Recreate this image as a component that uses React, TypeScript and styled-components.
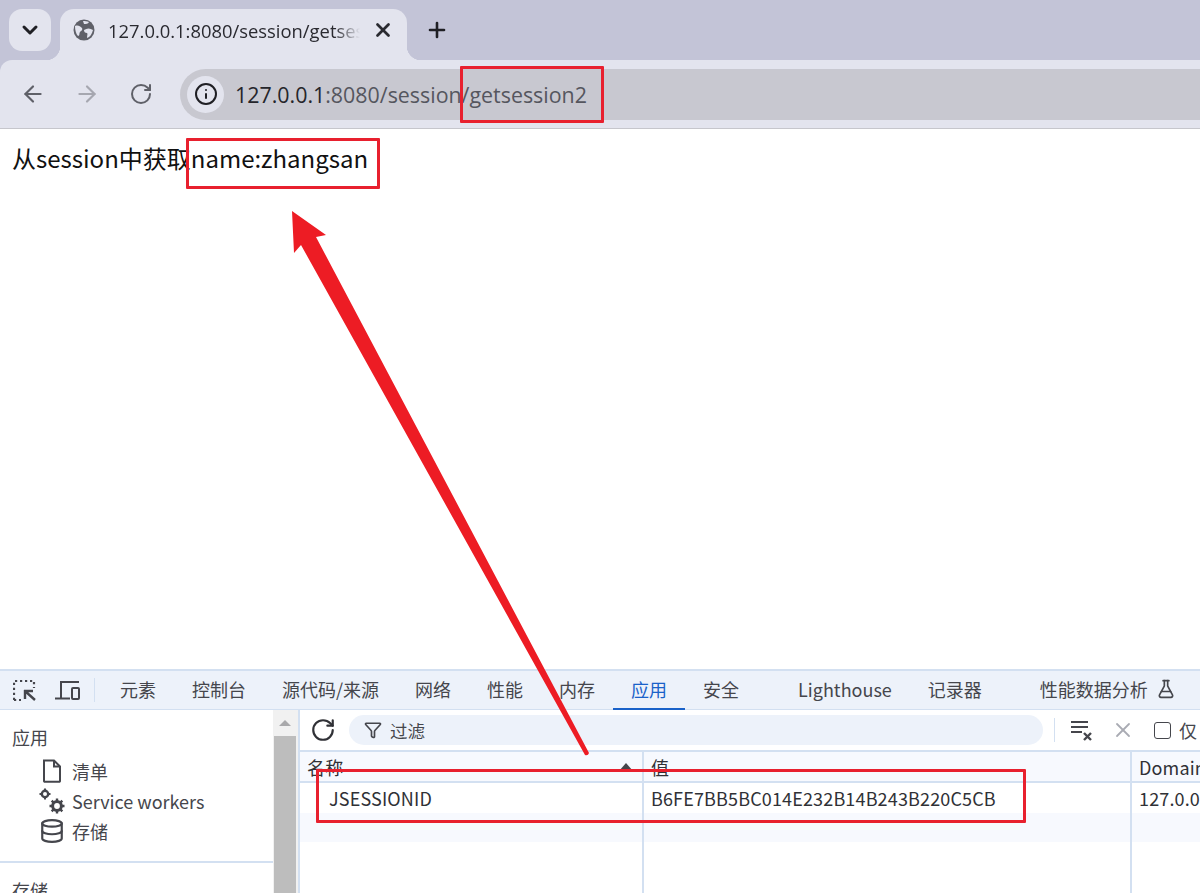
import React from "react";
import styled, { createGlobalStyle } from "styled-components";
import { ChevronDown, X, Plus, ArrowLeft, ArrowRight, RotateCw, Info, Filter, Database, FlaskConical } from "lucide-react";

const sans = `"Noto Sans CJK SC", "Noto Sans", sans-serif`;
const ui = `"Open Sans", "Noto Sans CJK SC", sans-serif`;

const Global = createGlobalStyle`
  html, body { margin: 0; padding: 0; background: #fff; }
  body { width: 1200px; height: 893px; overflow: hidden; font-family: ${ui}; }
`;

const Page = styled.div`
  position: relative;
  width: 1200px;
  height: 893px;
  overflow: hidden;
  display: flex;
  flex-direction: column;
`;

const BrowserChrome = styled.div`
  flex: none;
  background: #c3c4d7;
`;

const TabStrip = styled.div`
  height: 60px;
  display: flex;
  align-items: flex-end;
  padding-left: 9px;
  box-sizing: border-box;
`;

const TabMenu = styled.div`
  width: 42px;
  height: 42px;
  margin: 0 9px 9px 0;
  border-radius: 13px;
  background: #e3e4ee;
  display: flex;
  align-items: center;
  justify-content: center;
  color: #1f1f24;
  position: relative;
  z-index: 1;
`;

const Tab = styled.div`
  position: relative;
  width: 347px;
  height: 51px;
  background: #e3e4ee;
  border-radius: 14px 14px 0 0;
  display: flex;
  align-items: center;
  padding: 0 0 9px 13px;
  box-sizing: border-box;
  gap: 13px;
  color: #2a2a30;

  &::before,
  &::after {
    content: "";
    position: absolute;
    bottom: 0;
    width: 14px;
    height: 14px;
  }
  &::before {
    left: -14px;
    background: radial-gradient(circle at 0 0, transparent 14px, #e3e4ee 14.5px);
  }
  &::after {
    right: -14px;
    background: radial-gradient(circle at 100% 0, transparent 14px, #e3e4ee 14.5px);
  }
`;

const TabTitle = styled.div`
  width: 252px;
  overflow: hidden;
  white-space: nowrap;
  font-size: 18.4px;
  -webkit-mask-image: linear-gradient(to right, #000 90%, transparent 100%);
  mask-image: linear-gradient(to right, #000 90%, transparent 100%);
`;

const NewTab = styled.div`
  margin: 0 0 18px 18px;
  color: #1f1f24;
  display: flex;
`;

const Toolbar = styled.div`
  height: 69px;
  background: #e3e4ee;
  border-bottom: 1px solid #c6c6cc;
  border-radius: 12px 0 0 0;
  box-sizing: border-box;
  display: flex;
  align-items: center;
  padding-left: 20px;
`;

const NavIcon = styled.div<{ $dim?: boolean }>`
  width: 26px;
  margin-right: 28px;
  display: flex;
  justify-content: center;
  color: ${(p) => (p.$dim ? "#a6a7b0" : "#5f6068")};
`;

const AddressBar = styled.div`
  flex: 1;
  height: 51px;
  margin-left: -2px;
  background: #c8c8d0;
  border-radius: 26px 0 0 26px;
  display: flex;
  align-items: center;
  padding-left: 7px;
  font-size: 21.4px;
  color: #55565e;
`;

const InfoChip = styled.div`
  width: 37px;
  height: 37px;
  border-radius: 50%;
  background: #e3e4ee;
  color: #1f1f24;
  display: flex;
  align-items: center;
  justify-content: center;
  margin-right: 11px;
`;

const Host = styled.span`
  color: #25252b;
`;

const Content = styled.div`
  flex: 1;
  padding: 12px 12px;
  font-family: ${sans};
  font-size: 24px;
  line-height: 34px;
  color: #111;
`;

const Devtools = styled.div`
  height: 224px;
  flex: none;
  border-top: 2px solid #d3e0f1;
  box-sizing: border-box;
  display: flex;
  flex-direction: column;
  font-family: ${sans};
  color: #45464c;
`;

const DevBar = styled.div`
  height: 39px;
  flex: none;
  background: #edf2fa;
  border-bottom: 1px solid #d3e0f1;
  box-sizing: border-box;
  display: flex;
  align-items: stretch;
  padding-left: 13px;
  font-size: 18px;
  white-space: nowrap;
`;

const BarIcons = styled.div`
  display: flex;
  align-items: center;
  gap: 19px;
  padding-right: 15px;
  margin-right: 7px;
  position: relative;
  &::after {
    content: "";
    position: absolute;
    right: 0;
    top: 7px;
    bottom: 7px;
    width: 1px;
    background: #d3e0f1;
  }
`;

const DevTab = styled.div<{ $active?: boolean; $gap?: number }>`
  padding: 0 18px 2px;
  margin-right: ${(p) => p.$gap ?? 0}px;
  display: flex;
  align-items: center;
  gap: 8px;
  color: ${(p) => (p.$active ? "#1a62c9" : "#45464c")};
  border-bottom: 2px solid ${(p) => (p.$active ? "#1a62c9" : "transparent")};
  margin-bottom: -1px;
`;

const DevBody = styled.div`
  flex: 1;
  display: flex;
  min-height: 0;
`;

const Sidebar = styled.div`
  width: 273px;
  flex: none;
  padding-top: 12px;
  box-sizing: border-box;
  font-size: 18px;
  overflow: hidden;
`;

const SideHead = styled.div`
  height: 30px;
  line-height: 30px;
  padding-left: 12px;
  margin-bottom: 4px;
`;

const SideItem = styled.div`
  height: 30px;
  display: flex;
  align-items: center;
  padding-left: 39px;
  gap: 7px;
`;

const SideIcon = styled.div`
  width: 26px;
  display: flex;
  justify-content: center;
  color: #45464c;
`;

const SideRule = styled.div`
  height: 2px;
  background: #d3e0f1;
  margin: 15px 0 12px;
`;

const ScrollTrack = styled.div`
  width: 25px;
  flex: none;
  background: #f1f1f1;
  display: flex;
  flex-direction: column;
  align-items: center;
  box-sizing: border-box;
  padding: 0 2px 0 1px;
`;

const ScrollUp = styled.div`
  height: 26px;
  flex: none;
  display: flex;
  align-items: center;
  justify-content: center;
  &::before {
    content: "";
    border-left: 6px solid transparent;
    border-right: 6px solid transparent;
    border-bottom: 6px solid #a9a9ab;
  }
`;

const ScrollThumb = styled.div`
  flex: 1;
  width: 100%;
  background: #bdbdbd;
`;

const Main = styled.div`
  flex: 1;
  display: flex;
  flex-direction: column;
  min-width: 0;
  overflow: hidden;
  border-left: 2px solid #d3e0f1;
`;

const FilterBar = styled.div`
  height: 40px;
  flex: none;
  display: flex;
  align-items: center;
  padding-left: 10px;
  color: #45464c;
  white-space: nowrap;
`;

const FilterInput = styled.div`
  width: 694px;
  height: 30px;
  flex: none;
  margin-left: 13px;
  border-radius: 15px;
  background: #edf2fa;
  display: flex;
  align-items: center;
  gap: 8px;
  padding-left: 15px;
  box-sizing: border-box;
  font-size: 17.5px;
`;

const BarRule = styled.div`
  width: 1px;
  height: 24px;
  flex: none;
  margin: 0 15px 0 11px;
  background: #d3e0f1;
`;

const CheckBox = styled.div`
  width: 17px;
  height: 17px;
  border: 1.5px solid #45464c;
  border-radius: 3px;
  margin: 0 8px 0 19px;
  flex: none;
  box-sizing: border-box;
`;

const Grid = styled.div`
  flex: 1;
  display: grid;
  grid-template-columns: 344px 488px 1fr;
  grid-template-rows: 31px 30px 29px 1fr;
  border-top: 2px solid #d3e0f1;
  font-size: 18px;
  letter-spacing: 0.15px;
`;

const Cell = styled.div<{ $head?: boolean; $stripe?: boolean; $last?: boolean; $indent?: number }>`
  display: flex;
  align-items: center;
  justify-content: space-between;
  padding: 0 8px 0 ${(p) => p.$indent ?? 7}px;
  box-sizing: border-box;
  white-space: nowrap;
  overflow: hidden;
  color: #303136;
  background: ${(p) => (p.$head || p.$stripe ? "#f7f9fe" : "#fff")};
  border-right: ${(p) => (p.$last ? "none" : "2px solid #d3e0f1")};
  border-bottom: ${(p) => (p.$head ? "2px solid #d3e0f1" : "none")};
`;

const SortMark = styled.span`
  border-left: 7px solid transparent;
  border-right: 7px solid transparent;
  border-bottom: 8px solid #45464c;
  margin-right: 1px;
`;

const RedBox = styled.div<{ $x: number; $y: number; $w: number; $h: number }>`
  position: absolute;
  left: ${(p) => p.$x}px;
  top: ${(p) => p.$y}px;
  width: ${(p) => p.$w}px;
  height: ${(p) => p.$h}px;
  border: 3px solid #e8202e;
  border-radius: 1px;
  box-sizing: border-box;
`;

const Overlay = styled.svg`
  position: absolute;
  left: 0;
  top: 0;
`;

const tabs: { label: string; active?: boolean; gap?: number }[] = [
  { label: "元素" },
  { label: "控制台" },
  { label: "源代码/来源" },
  { label: "网络" },
  { label: "性能" },
  { label: "内存" },
  { label: "应用", active: true },
  { label: "安全", gap: 23 },
  { label: "Lighthouse" },
  { label: "记录器", gap: 22 },
];

const GlobeIcon = () => (
  <svg width="22" height="22" viewBox="0 0 22 22">
    <circle cx="11" cy="11" r="10.5" fill="#5f6068" />
    <path d="M2 7c3-1 5 0 7 2 1 2-1 3-2 4s0 4-2 4c-2-2-3-6-3-10z" fill="#e3e4ee" />
    <path d="M11 11c3-2 6-2 9 0-1 4-3 7-6 8 0-3 1-4 0-5-2 0-3-1-3-3z" fill="#e3e4ee" />
    <path d="M10 2c2 0 4 0 6 1-1 2-3 2-5 2z" fill="#e3e4ee" />
  </svg>
);

const InspectIcon = () => (
  <svg width="23" height="21" viewBox="0 0 23 21" fill="none" stroke="#45464c">
    <path d="M1 20V1h20v7" strokeWidth="2.2" strokeDasharray="2.2 2.8" />
    <path d="M1 20h7" strokeWidth="2.2" strokeDasharray="2.2 2.8" />
    <path d="M12 10v9M11 11h9M12 11l10 9" strokeWidth="2.4" />
  </svg>
);

const DeviceIcon = () => (
  <svg width="25" height="20" viewBox="0 0 25 20" fill="none" stroke="#45464c" strokeWidth="2">
    <path d="M6 18V2h18" />
    <path d="M0 18.5h15" />
    <rect x="17" y="8" width="7" height="11" rx="1" />
  </svg>
);

const FileIcon = () => (
  <svg width="20" height="24" viewBox="0 0 20 24" fill="none" stroke="#45464c" strokeWidth="2">
    <path d="M2 1.5h10l6 6V22a.8.8 0 0 1-.8.8H2.8A.8.8 0 0 1 2 22z" />
    <path d="M12 1.5v6h6" />
  </svg>
);

const GearsIcon = () => (
  <svg width="26" height="26" viewBox="0 0 26 26" fill="none" stroke="#45464c">
    <circle cx="6" cy="6" r="3.2" strokeWidth="2.4" />
    <path d="M6 .5v2M6 9.5v2M.5 6h2M9.5 6h2" strokeWidth="2" />
    <circle cx="18" cy="18" r="4.4" strokeWidth="3" />
    <path d="M18 10.5v3M18 22.5v3M10.5 18h3M22.5 18h3M12.7 12.7l2.1 2.1M21.2 21.2l2.1 2.1M12.7 23.3l2.1-2.1M21.2 14.8l2.1-2.1" strokeWidth="2.4" />
  </svg>
);

const ClearIcon = () => (
  <svg width="24" height="24" viewBox="0 0 24 24" fill="none" stroke="#45464c" strokeWidth="2">
    <path d="M1 4h17M1 9h17M1 14h11" />
    <path d="M14 15l7 7M21 15l-7 7" strokeWidth="2.4" />
  </svg>
);

export default function App() {
  return (
    <Page>
      <Global />
      <BrowserChrome>
        <TabStrip>
          <TabMenu>
            <ChevronDown size={24} strokeWidth={3} />
          </TabMenu>
          <Tab>
            <GlobeIcon />
            <TabTitle>127.0.0.1:8080/session/getsession2</TabTitle>
            <X size={22} strokeWidth={3} style={{ marginLeft: -1 }} />
          </Tab>
          <NewTab>
            <Plus size={24} strokeWidth={2.6} />
          </NewTab>
        </TabStrip>
        <Toolbar>
          <NavIcon>
            <ArrowLeft size={26} strokeWidth={2} />
          </NavIcon>
          <NavIcon $dim>
            <ArrowRight size={26} strokeWidth={2} />
          </NavIcon>
          <NavIcon>
            <RotateCw size={24} strokeWidth={2} />
          </NavIcon>
          <AddressBar>
            <InfoChip>
              <Info size={24} strokeWidth={2} />
            </InfoChip>
            <span>
              <Host>127.0.0.1</Host>:8080/session/getsession2
            </span>
          </AddressBar>
        </Toolbar>
      </BrowserChrome>
      <Content>从session中获取name:zhangsan</Content>
      <Devtools>
        <DevBar>
          <BarIcons>
            <InspectIcon />
            <DeviceIcon />
          </BarIcons>
          {tabs.map((t) => (
            <DevTab key={t.label} $active={t.active} $gap={t.gap}>
              {t.label}
            </DevTab>
          ))}
          <DevTab>
            性能数据分析
            <FlaskConical size={20} strokeWidth={2} />
          </DevTab>
        </DevBar>
        <DevBody>
          <Sidebar>
            <SideHead>应用</SideHead>
            <SideItem>
              <SideIcon>
                <FileIcon />
              </SideIcon>
              清单
            </SideItem>
            <SideItem>
              <SideIcon>
                <GearsIcon />
              </SideIcon>
              Service workers
            </SideItem>
            <SideItem>
              <SideIcon>
                <Database size={26} strokeWidth={2} />
              </SideIcon>
              存储
            </SideItem>
            <SideRule />
            <SideHead>存储</SideHead>
          </Sidebar>
          <ScrollTrack>
            <ScrollUp />
            <ScrollThumb />
          </ScrollTrack>
          <Main>
            <FilterBar>
              <RotateCw size={26} strokeWidth={2} color="#303136" />
              <FilterInput>
                <Filter size={18} strokeWidth={2.2} />
                过滤
              </FilterInput>
              <BarRule />
              <ClearIcon />
              <X size={24} strokeWidth={1.8} color="#a9abb3" style={{ marginLeft: 17, flex: "none" }} />
              <CheckBox />
              <span style={{ fontSize: 18 }}>仅</span>
            </FilterBar>
            <Grid>
              <Cell $head>
                名称
                <SortMark />
              </Cell>
              <Cell $head>值</Cell>
              <Cell $head $last>
                Domain
              </Cell>
              <Cell $indent={29}>JSESSIONID</Cell>
              <Cell>B6FE7BB5BC014E232B14B243B220C5CB</Cell>
              <Cell $last>127.0.0.1</Cell>
              <Cell $stripe />
              <Cell $stripe />
              <Cell $stripe $last />
              <Cell />
              <Cell />
              <Cell $last />
            </Grid>
          </Main>
        </DevBody>
      </Devtools>
      <RedBox $x={460} $y={66} $w={144} $h={57} />
      <RedBox $x={186} $y={138} $w={194} $h={51} />
      <RedBox $x={316} $y={769} $w={710} $h={54} />
      <Overlay width="1200" height="893" viewBox="0 0 1200 893">
        <path
          d="M292 211 L326 235 L316 237 L589 753 Q588 756 585 755 L301 245 L294 253 Z"
          fill="#ed1c24"
        />
      </Overlay>
    </Page>
  );
}
